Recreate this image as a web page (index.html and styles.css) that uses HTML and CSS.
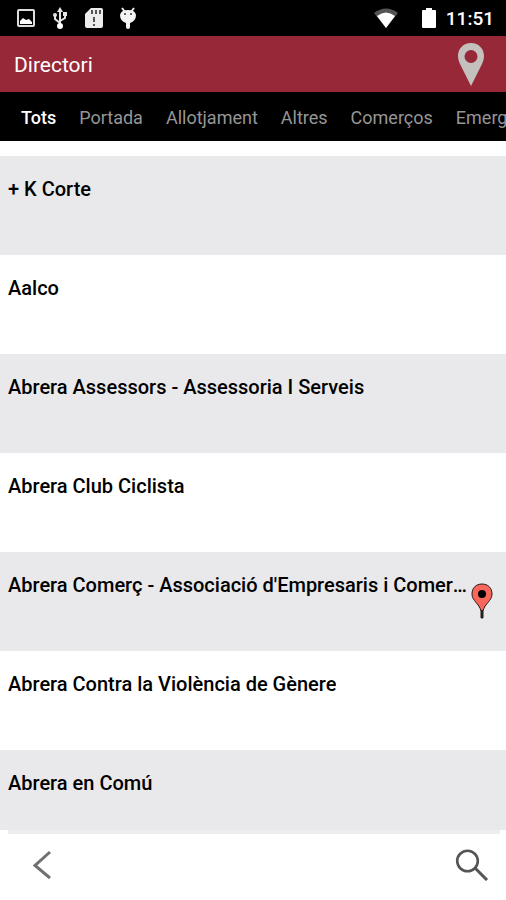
FILE: index.html
```html
<!DOCTYPE html>
<html lang="ca">
<head>
<meta charset="utf-8">
<meta name="viewport" content="width=device-width, initial-scale=1">
<title>Directori</title>
<link rel="stylesheet" href="styles.css">
</head>
<body>
<div class="status">
  <div class="status-group status-left">
    <svg width="18" height="18" viewBox="0 0 18 18" aria-hidden="true"><rect x="1" y="1" width="16" height="16" rx="1" fill="none" stroke="#ddd" stroke-width="2"/><path d="M3 12l3-3 3 2 3-1 3 3v2H3z" fill="#fff"/></svg>
    <svg width="16" height="22" viewBox="0 0 16 22" aria-hidden="true"><path d="M8 3v16M8 16l-5-4V8M8 14l5-3V7" fill="none" stroke="#e4e4e4" stroke-width="2"/><path d="M8 0l3 5H5z" fill="#e4e4e4"/><circle cx="8" cy="19" r="3" fill="#fff"/><circle cx="3" cy="8" r="2" fill="#e4e4e4"/><path d="M11 5h4v4h-4z" fill="#e4e4e4"/></svg>
    <svg width="18" height="22" viewBox="0 0 18 22" aria-hidden="true"><path d="M6 1h10q2 0 2 2v16q0 2-2 2H2q-2 0-2-2V7z" fill="#ececec"/><path d="M7 3v4M11 3v4M15 3v4M9 10v5M9 17v2" stroke="#555" stroke-width="2"/></svg>
    <svg width="16" height="22" viewBox="0 0 16 22" aria-hidden="true"><path d="M2 1l3 4M14 1l-3 4" stroke="#eee" stroke-width="2"/><path d="M0 8q1-5 8-5t8 5q0 6-6 8v4q0 2-2 2t-2-2v-4q-6-2-6-8z" fill="#f4f4f4"/><circle cx="5" cy="7" r="1" fill="#333"/><circle cx="11" cy="7" r="1" fill="#333"/></svg>
  </div>
  <div class="status-group">
    <svg class="wifi" width="24" height="20" viewBox="0 0 24 20" aria-hidden="true"><path d="M0 5Q12-4 24 5L12 20z" fill="#555"/><path d="M3 8Q12 1 21 8L12 20z" fill="#fff"/></svg>
    <svg width="14" height="20" viewBox="0 0 14 20" aria-hidden="true"><path d="M4 0h6v2h3q1 0 1 1v16q0 1-1 1H1q-1 0-1-1V3q0-1 1-1h3z" fill="#fff"/></svg>
    <time class="clock">11:51</time>
  </div>
</div>
<header class="header">
  <h1 class="title">Directori</h1>
  <button class="icon-button" type="button" aria-label="Mapa">
    <svg width="26" height="43" viewBox="0 0 26 43"><path fill="#c4c0bd" fill-rule="evenodd" d="M13 0C5 0 0 6 0 13c0 3 1 6 3 10l10 20 10-20c2-4 3-7 3-10C26 6 21 0 13 0zm0 7a6 6 0 1 1 0 13 6 6 0 0 1 0-13z"/></svg>
  </button>
</header>
<nav class="tabs">
  <a class="tab tab-active" href="#tots">Tots</a>
  <a class="tab" href="#portada">Portada</a>
  <a class="tab" href="#allotjament">Allotjament</a>
  <a class="tab" href="#altres">Altres</a>
  <a class="tab" href="#comercos">Comerços</a>
  <a class="tab" href="#emergencies">Emergències</a>
</nav>
<main class="content">
  <ul class="list">
    <li class="row"><span class="name">+ K Corte</span></li>
    <li class="row"><span class="name">Aalco</span></li>
    <li class="row"><span class="name">Abrera Assessors - Assessoria I Serveis</span></li>
    <li class="row"><span class="name">Abrera Club Ciclista</span></li>
    <li class="row"><span class="name">Abrera Comerç - Associació d'Empresaris i Comerciants</span>
      <svg class="marker" width="22" height="36" viewBox="0 0 22 36" aria-hidden="true"><path d="M11 1C5 1 1 5 1 11c0 7 7 9 9 17v7h2v-7c2-8 9-10 9-17 0-6-4-10-10-10z" fill="#f8665c" stroke="#2b1a19" stroke-width="1"/><path d="M11 27v8" stroke="#222" stroke-width="2"/><circle cx="11" cy="11" r="4" fill="#000"/></svg>
    </li>
    <li class="row"><span class="name">Abrera Contra la Violència de Gènere</span></li>
    <li class="row"><span class="name">Abrera en Comú</span></li>
  </ul>
</main>
<footer class="footer">
  <button class="icon-button" type="button" aria-label="Enrere">
    <svg width="20" height="30" viewBox="0 0 20 30"><path d="M18 2L3 15.500 18 28" fill="none" stroke="#707070" stroke-width="3"/></svg>
  </button>
  <button class="icon-button" type="button" aria-label="Cerca">
    <svg width="34" height="32" viewBox="0 0 34 32"><circle cx="12.500" cy="12" r="10.300" fill="none" stroke="#555" stroke-width="2.600"/><path d="M20 19l12 12" stroke="#555" stroke-width="3"/></svg>
  </button>
</footer>
</body>
</html>
```
FILE: styles.css
```css
* { box-sizing: border-box; }

body {
  margin: 0;
  height: 100vh;
  display: flex;
  flex-direction: column;
  overflow: hidden;
  background: #fff;
  color: #000;
  font-family: Roboto, "Liberation Sans", sans-serif;
}

svg { display: block; flex: none; }

.status {
  flex: none;
  height: 36px;
  padding: 0 12px 0 17px;
  display: flex;
  align-items: center;
  justify-content: space-between;
  background: #000;
  color: #fff;
}

.status-group { display: flex; align-items: center; gap: 10px; }
.status-left { gap: 17px; }
.wifi { margin-right: 14px; }
.clock { font-size: 19px; font-weight: 500; line-height: 24px; padding-top: 2px; }

.header {
  flex: none;
  height: 56px;
  padding: 0 22px 0 14px;
  display: flex;
  align-items: center;
  justify-content: space-between;
  background: #972837;
  color: #fff;
}

.title { margin: 0; padding-top: 2px; font-size: 21px; font-weight: 400; line-height: 24px; }

.icon-button { padding: 0; border: 0; background: none; cursor: pointer; }

.tabs {
  flex: none;
  height: 49px;
  padding: 2px 21px 0;
  display: flex;
  align-items: center;
  gap: 23px;
  overflow: hidden;
  background: #000;
}

.tab {
  flex: none;
  color: #969696;
  font-size: 18px;
  line-height: 24px;
  text-decoration: none;
}

.tab-active { color: #fff; font-weight: 500; }

.content { flex: 1; min-height: 0; padding-top: 15px; overflow: hidden; }

.list { margin: 0; padding: 0; list-style: none; }

.row {
  height: 99px;
  padding: 21px 13px 0 8px;
  display: flex;
  justify-content: space-between;
  gap: 2px;
}

.row:nth-child(odd) { background: #e9e9eb; }

.name {
  min-width: 0;
  overflow: hidden;
  white-space: nowrap;
  text-overflow: ellipsis;
  font-size: 20px;
  font-weight: 500;
  line-height: 24px;
}

.marker { margin-top: 10px; }

.footer {
  position: relative;
  flex: none;
  height: 70px;
  padding: 0 17px 0 32px;
  display: flex;
  align-items: center;
  justify-content: space-between;
}

.footer::before {
  content: "";
  position: absolute;
  top: 0;
  left: 8px;
  right: 6px;
  height: 4px;
  background: #ededef;
}
```
